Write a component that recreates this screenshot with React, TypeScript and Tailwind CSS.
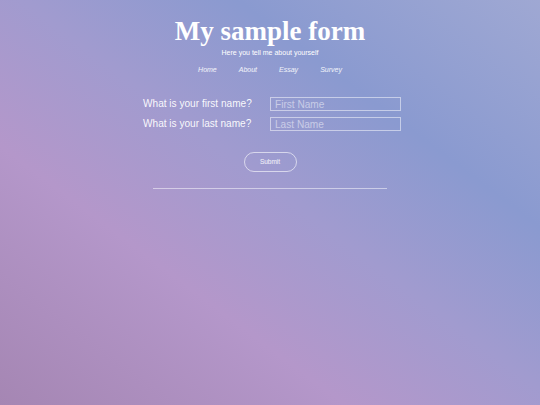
export default function App() {
  return (
    <div className="min-h-[405px] w-full bg-[linear-gradient(to_top_right,#a586b3_0%,#b497ca_32%,#a19bcf_52%,#8a9ad0_72%,#9fa8d3_100%)] font-['Liberation_Sans',Arial,sans-serif] text-white">
      <div className="flex flex-col items-center pt-[14px]">
        <h1 className="font-['Liberation_Serif','Times_New_Roman',serif] text-[27px] font-bold leading-[34px]">
          My sample form
        </h1>
        <p className="text-[7px] leading-[9px]">Here you tell me about yourself</p>

        <nav className="mt-[8px] flex gap-[22px] text-[7px] italic leading-[10px] text-white/90">
          <a>Home</a>
          <a>About</a>
          <a>Essay</a>
          <a>Survey</a>
        </nav>

        <form className="mt-[22px] ml-[4px] flex flex-col gap-[6px]">
          <div className="flex items-center">
            <label className="w-[127px] text-[10.1px] leading-[14px] text-white/95">What is your first name?</label>
            <input
              className="h-[14px] w-[131px] border border-white/50 bg-transparent px-[4px] text-[10.1px] leading-[12px] outline-none placeholder:text-white/50"
              placeholder="First Name"
            />
          </div>
          <div className="flex items-center">
            <label className="w-[127px] text-[10.1px] leading-[14px] text-white/95">What is your last name?</label>
            <input
              className="h-[14px] w-[131px] border border-white/50 bg-transparent px-[4px] text-[10.1px] leading-[12px] outline-none placeholder:text-white/50"
              placeholder="Last Name"
            />
          </div>
        </form>

        <button className="mt-[21px] h-[20px] w-[53px] rounded-full border border-white/60 text-[6.5px] text-white/90">
          Submit
        </button>

        <hr className="mt-[16px] w-[234px] border-t border-white/50" />
      </div>
    </div>
  );
}
